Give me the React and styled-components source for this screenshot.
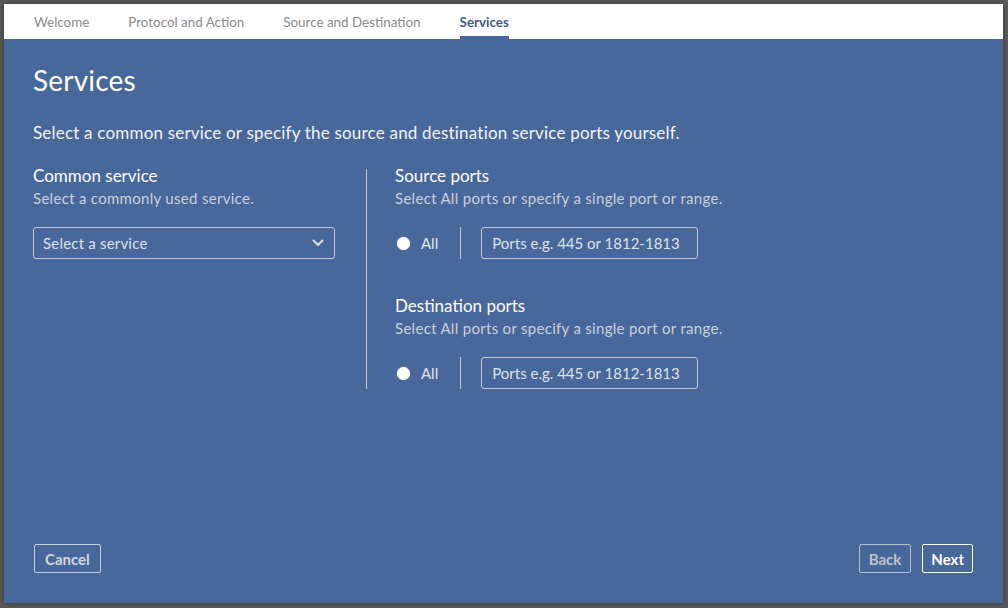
import styled, { createGlobalStyle } from 'styled-components';

const GlobalStyle = createGlobalStyle`
  html, body {
    margin: 0;
    padding: 0;
    background: #5a5a5a;
  }
  * {
    box-sizing: border-box;
  }
`;

const tabs = ['Welcome', 'Protocol and Action', 'Source and Destination', 'Services'];

const Chevron = () => (
  <svg width="12" height="8" viewBox="0 0 12 8">
    <polyline
      points="1.5,1.5 6,6 10.5,1.5"
      fill="none"
      stroke="#dfe4ec"
      strokeWidth="2"
      strokeLinecap="round"
      strokeLinejoin="round"
    />
  </svg>
);

const PortGroup = ({ title, first }) => (
  <Group first={first}>
    <Heading>{title}</Heading>
    <Hint>Select All ports or specify a single port or range.</Hint>
    <PortRow>
      <Radio />
      <RadioLabel>All</RadioLabel>
      <RowDivider />
      <TextBox>Ports e.g. 445 or 1812-1813</TextBox>
    </PortRow>
  </Group>
);

const App = () => {
  return (
    <Page>
      <GlobalStyle />
      <Dialog>
        <TabBar>
          {tabs.map(t => (
            <Tab key={t} active={t === 'Services'}>
              {t}
            </Tab>
          ))}
        </TabBar>
        <Body>
          <Title>Services</Title>
          <Intro>
            Select a common service or specify the source and destination service ports yourself.
          </Intro>
          <Columns>
            <LeftCol>
              <Group first>
                <Heading>Common service</Heading>
                <Hint>Select a commonly used service.</Hint>
                <SelectBox>
                  <span>Select a service</span>
                  <Chevron />
                </SelectBox>
              </Group>
            </LeftCol>
            <ColDivider />
            <RightCol>
              <PortGroup title="Source ports" first />
              <PortGroup title="Destination ports" />
            </RightCol>
          </Columns>
        </Body>
        <Footer>
          <Button>Cancel</Button>
          <ButtonGroup>
            <Button variant="muted">Back</Button>
            <Button variant="primary">Next</Button>
          </ButtonGroup>
        </Footer>
      </Dialog>
    </Page>
  );
};

export default App;

const Page = styled.div`
  width: 1008px;
  height: 608px;
  padding: 4px 5px 5px 4px;
  font-family: Lato, 'Noto Sans', sans-serif;
`;

const Dialog = styled.div`
  width: 999px;
  height: 599px;
  display: flex;
  flex-direction: column;
  background: #48679a;
  box-shadow: 0 0 6px rgba(0, 0, 0, 0.4);
`;

const TabBar = styled.div`
  height: 35px;
  background: #fff;
  display: flex;
  gap: 39px;
  padding-left: 30px;
`;

const Tab = styled.div`
  display: flex;
  align-items: center;
  padding-top: 3px;
  font-size: 13.4px;
  color: ${p => (p.active ? '#3e5d8f' : '#8a8a8a')};
  font-weight: ${p => (p.active ? 700 : 400)};
  border-bottom: 3px solid ${p => (p.active ? '#48679a' : 'transparent')};
`;

const Body = styled.div`
  flex: 1;
  padding: 21px 29px 0;
  color: #fff;
`;

const Title = styled.h1`
  margin: 0;
  font-size: 28px;
  line-height: 40px;
  font-weight: 400;
  letter-spacing: 0.2px;
`;

const Intro = styled.p`
  margin: 22px 0 0;
  font-size: 17px;
  line-height: 22px;
  letter-spacing: 0.2px;
  color: #f2f4f8;
`;

const Columns = styled.div`
  display: flex;
  margin-top: 22px;
`;

const LeftCol = styled.div`
  width: 302px;
  margin-right: 31px;
`;

const ColDivider = styled.div`
  width: 1px;
  margin-top: 3px;
  background: #c2cad8;
`;

const RightCol = styled.div`
  padding-left: 28px;
`;

const Group = styled.div`
  margin-top: ${p => (p.first ? '0' : '37px')};
`;

const Heading = styled.div`
  font-size: 17px;
  line-height: 20px;
  color: #fff;
`;

const Hint = styled.div`
  margin-top: 2px;
  font-size: 15px;
  line-height: 20px;
  letter-spacing: 0.3px;
  color: #c9d1dd;
`;

const SelectBox = styled.div`
  margin-top: 19px;
  height: 32px;
  display: flex;
  align-items: center;
  justify-content: space-between;
  padding: 0 10px 0 9px;
  border: 1px solid #c4ccda;
  border-radius: 3px;
  font-size: 15px;
  letter-spacing: 0.2px;
  color: #dde2ea;
`;

const PortRow = styled.div`
  margin-top: 19px;
  height: 32px;
  display: flex;
  align-items: center;
`;

const Radio = styled.span`
  width: 13px;
  height: 13px;
  margin-left: 2px;
  border-radius: 50%;
  background: #fff;
  box-shadow: 0 0 1px rgba(255, 255, 255, 0.8);
`;

const RadioLabel = styled.span`
  margin-left: 11px;
  font-size: 15px;
  color: #e2e6ee;
`;

const RowDivider = styled.span`
  width: 1px;
  height: 32px;
  margin-left: 22px;
  background: #c2cad8;
`;

const TextBox = styled.div`
  margin-left: 20px;
  width: 217px;
  height: 32px;
  display: flex;
  align-items: center;
  padding-left: 10px;
  border: 1px solid #c4ccda;
  border-radius: 3px;
  font-size: 15px;
  color: #dde2ea;
`;

const Footer = styled.div`
  display: flex;
  justify-content: space-between;
  align-items: center;
  padding: 0 30px 30px;
`;

const ButtonGroup = styled.div`
  display: flex;
  gap: 11px;
`;

const buttonPadding = { primary: '8px', muted: '9px' };

const Button = styled.button`
  height: 29px;
  padding: 0 ${p => buttonPadding[p.variant] || '10px'};
  background: transparent;
  border: 1px solid
    ${p => (p.variant === 'primary' ? '#ffffff' : p.variant === 'muted' ? '#b7c0ce' : '#c8ceda')};
  border-radius: 2px;
  font-family: Lato, 'Noto Sans', sans-serif;
  font-size: 15px;
  font-weight: 700;
  color: ${p => (p.variant === 'primary' ? '#ffffff' : p.variant === 'muted' ? '#bcc4d0' : '#d2d7e0')};
`;
